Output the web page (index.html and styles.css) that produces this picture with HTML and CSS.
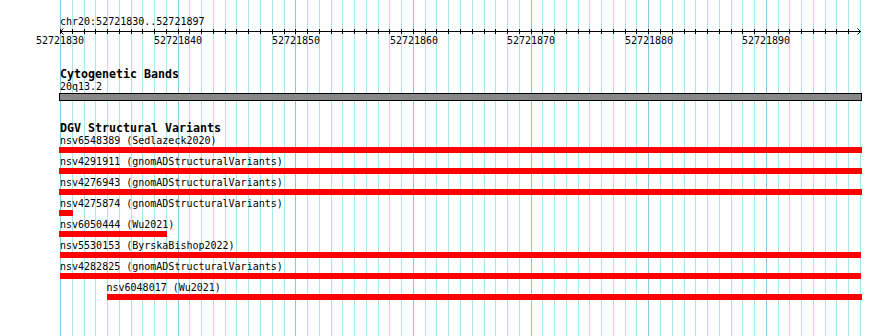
FILE: index.html
```html
<!DOCTYPE html>
<html>
<head>
<meta charset="utf-8">
<title>chr20:52721830..52721897</title>
<link rel="stylesheet" href="styles.css">
</head>
<body>
<div class="view">
  <svg class="grid" width="890" height="336" viewBox="0 0 890 336">
    <path class="grid-minor" d="M72.5 0V336M84.5 0V336M95.5 0V336M107.5 0V336M119.5 0V336M131.5 0V336M142.5 0V336M154.5 0V336M166.5 0V336M189.5 0V336M201.5 0V336M213.5 0V336M225.5 0V336M236.5 0V336M248.5 0V336M260.5 0V336M272.5 0V336M284.5 0V336M307.5 0V336M319.5 0V336M331.5 0V336M342.5 0V336M354.5 0V336M366.5 0V336M378.5 0V336M389.5 0V336M401.5 0V336M425.5 0V336M436.5 0V336M448.5 0V336M460.5 0V336M472.5 0V336M484.5 0V336M495.5 0V336M507.5 0V336M519.5 0V336M542.5 0V336M554.5 0V336M566.5 0V336M578.5 0V336M589.5 0V336M601.5 0V336M613.5 0V336M625.5 0V336M636.5 0V336M660.5 0V336M672.5 0V336M684.5 0V336M695.5 0V336M707.5 0V336M719.5 0V336M731.5 0V336M742.5 0V336M754.5 0V336M778.5 0V336M789.5 0V336M801.5 0V336M813.5 0V336M825.5 0V336M836.5 0V336M848.5 0V336M860.5 0V336"/>
    <path class="grid-major" d="M60.5 0V336M178.5 0V336M295.5 0V336M413.5 0V336M531.5 0V336M648.5 0V336M766.5 0V336"/>
  </svg>
  <div class="content">
    <div class="locus">chr20:52721830..52721897</div>
    <svg class="ruler" width="890" height="20" viewBox="0 0 890 20">
      <path class="axis" d="M60 3.5H861"/>
      <path class="axis" d="M60.5 1V6M72.5 1V6M84.5 1V6M95.5 1V6M107.5 1V6M119.5 1V6M131.5 1V6M142.5 1V6M154.5 1V6M166.5 1V6M178.5 1V6M189.5 1V6M201.5 1V6M213.5 1V6M225.5 1V6M236.5 1V6M248.5 1V6M260.5 1V6M272.5 1V6M284.5 1V6M295.5 1V6M307.5 1V6M319.5 1V6M331.5 1V6M342.5 1V6M354.5 1V6M366.5 1V6M378.5 1V6M389.5 1V6M401.5 1V6M413.5 1V6M425.5 1V6M436.5 1V6M448.5 1V6M460.5 1V6M472.5 1V6M484.5 1V6M495.5 1V6M507.5 1V6M519.5 1V6M531.5 1V6M542.5 1V6M554.5 1V6M566.5 1V6M578.5 1V6M589.5 1V6M601.5 1V6M613.5 1V6M625.5 1V6M636.5 1V6M648.5 1V6M660.5 1V6M672.5 1V6M684.5 1V6M695.5 1V6M707.5 1V6M719.5 1V6M731.5 1V6M742.5 1V6M754.5 1V6M766.5 1V6M778.5 1V6M789.5 1V6M801.5 1V6M813.5 1V6M825.5 1V6M836.5 1V6M848.5 1V6"/>
      <polyline class="arrow" points="63.5,0.5 60.5,3.5 63.5,6.5"/>
      <polyline class="arrow" points="857.5,0.5 860.5,3.5 857.5,6.5"/>
      <text class="tick-label" x="60" y="16">52721830</text>
      <text class="tick-label" x="178" y="16">52721840</text>
      <text class="tick-label" x="296" y="16">52721850</text>
      <text class="tick-label" x="414" y="16">52721860</text>
      <text class="tick-label" x="531" y="16">52721870</text>
      <text class="tick-label" x="649" y="16">52721880</text>
      <text class="tick-label" x="766" y="16">52721890</text>
    </svg>

    <section class="track track-bands">
      <h2 class="track-title">Cytogenetic Bands</h2>
      <div class="label label-default">20q13.2</div>
      <div class="band"></div>
    </section>

    <section class="track track-dgv">
      <h2 class="track-title">DGV Structural Variants</h2>
      <div class="feature">
        <div class="label label-default">nsv6548389 (Sedlazeck2020)</div>
        <div class="bar" style="margin-left:59px;width:803px"></div>
      </div>
      <div class="feature">
        <div class="label label-default">nsv4291911 (gnomADStructuralVariants)</div>
        <div class="bar" style="margin-left:59px;width:803px"></div>
      </div>
      <div class="feature">
        <div class="label label-default">nsv4276943 (gnomADStructuralVariants)</div>
        <div class="bar" style="margin-left:59px;width:803px"></div>
      </div>
      <div class="feature">
        <div class="label label-default">nsv4275874 (gnomADStructuralVariants)</div>
        <div class="bar" style="margin-left:59px;width:14px"></div>
      </div>
      <div class="feature">
        <div class="label label-default">nsv6050444 (Wu2021)</div>
        <div class="bar" style="margin-left:59px;width:108px"></div>
      </div>
      <div class="feature">
        <div class="label label-default">nsv5530153 (ByrskaBishop2022)</div>
        <div class="bar" style="margin-left:60px;width:801px"></div>
      </div>
      <div class="feature">
        <div class="label label-default">nsv4282825 (gnomADStructuralVariants)</div>
        <div class="bar" style="margin-left:60px;width:801px"></div>
      </div>
      <div class="feature">
        <div class="label" style="margin-left:106.5px">nsv6048017 (Wu2021)</div>
        <div class="bar" style="margin-left:107px;width:755px"></div>
      </div>
    </section>
  </div>
</div>
</body>
</html>
```

FILE: styles.css
```css
html, body {
  margin: 0;
  padding: 0;
  background: #ffffff;
}

body {
  font-family: "DejaVu Sans Mono", "Liberation Mono", monospace;
  font-size: 10px;
  color: #000000;
}

.view {
  position: relative;
  width: 890px;
  height: 336px;
  overflow: hidden;
}

.grid {
  position: absolute;
  top: 0;
  left: 0;
  display: block;
}

.grid-minor {
  stroke: #a6e8ee;
  stroke-width: 1;
  fill: none;
  shape-rendering: crispEdges;
}

.grid-major {
  stroke: #86c6e6;
  stroke-width: 1;
  fill: none;
  shape-rendering: crispEdges;
}

.content {
  position: relative;
}

.locus {
  padding-top: 15px;
  padding-left: 60px;
  line-height: 13px;
}

.ruler {
  display: block;
}

.axis {
  stroke: #000000;
  stroke-width: 1;
  fill: none;
  shape-rendering: crispEdges;
}

.arrow {
  stroke: #000000;
  stroke-width: 1;
  fill: none;
}

.tick-label {
  font-family: "DejaVu Sans Mono", "Liberation Mono", monospace;
  font-size: 10px;
  fill: #000000;
  text-anchor: middle;
}

.track-title {
  margin: 0 0 0 60px;
  font-size: 11.63px;
  font-weight: bold;
  line-height: 12px;
}

.track-bands .track-title {
  margin-top: 20px;
}

.track-dgv .track-title {
  margin-top: 21px;
}

.label {
  line-height: 13px;
  white-space: nowrap;
}

.label-default {
  margin-left: 60px;
}

.band {
  margin-left: 59px;
  width: 801px;
  height: 6px;
  border: 1px solid #000000;
  background: #888888;
}

.bar {
  height: 6px;
  background: #ff0000;
  margin-bottom: 2px;
}
```
